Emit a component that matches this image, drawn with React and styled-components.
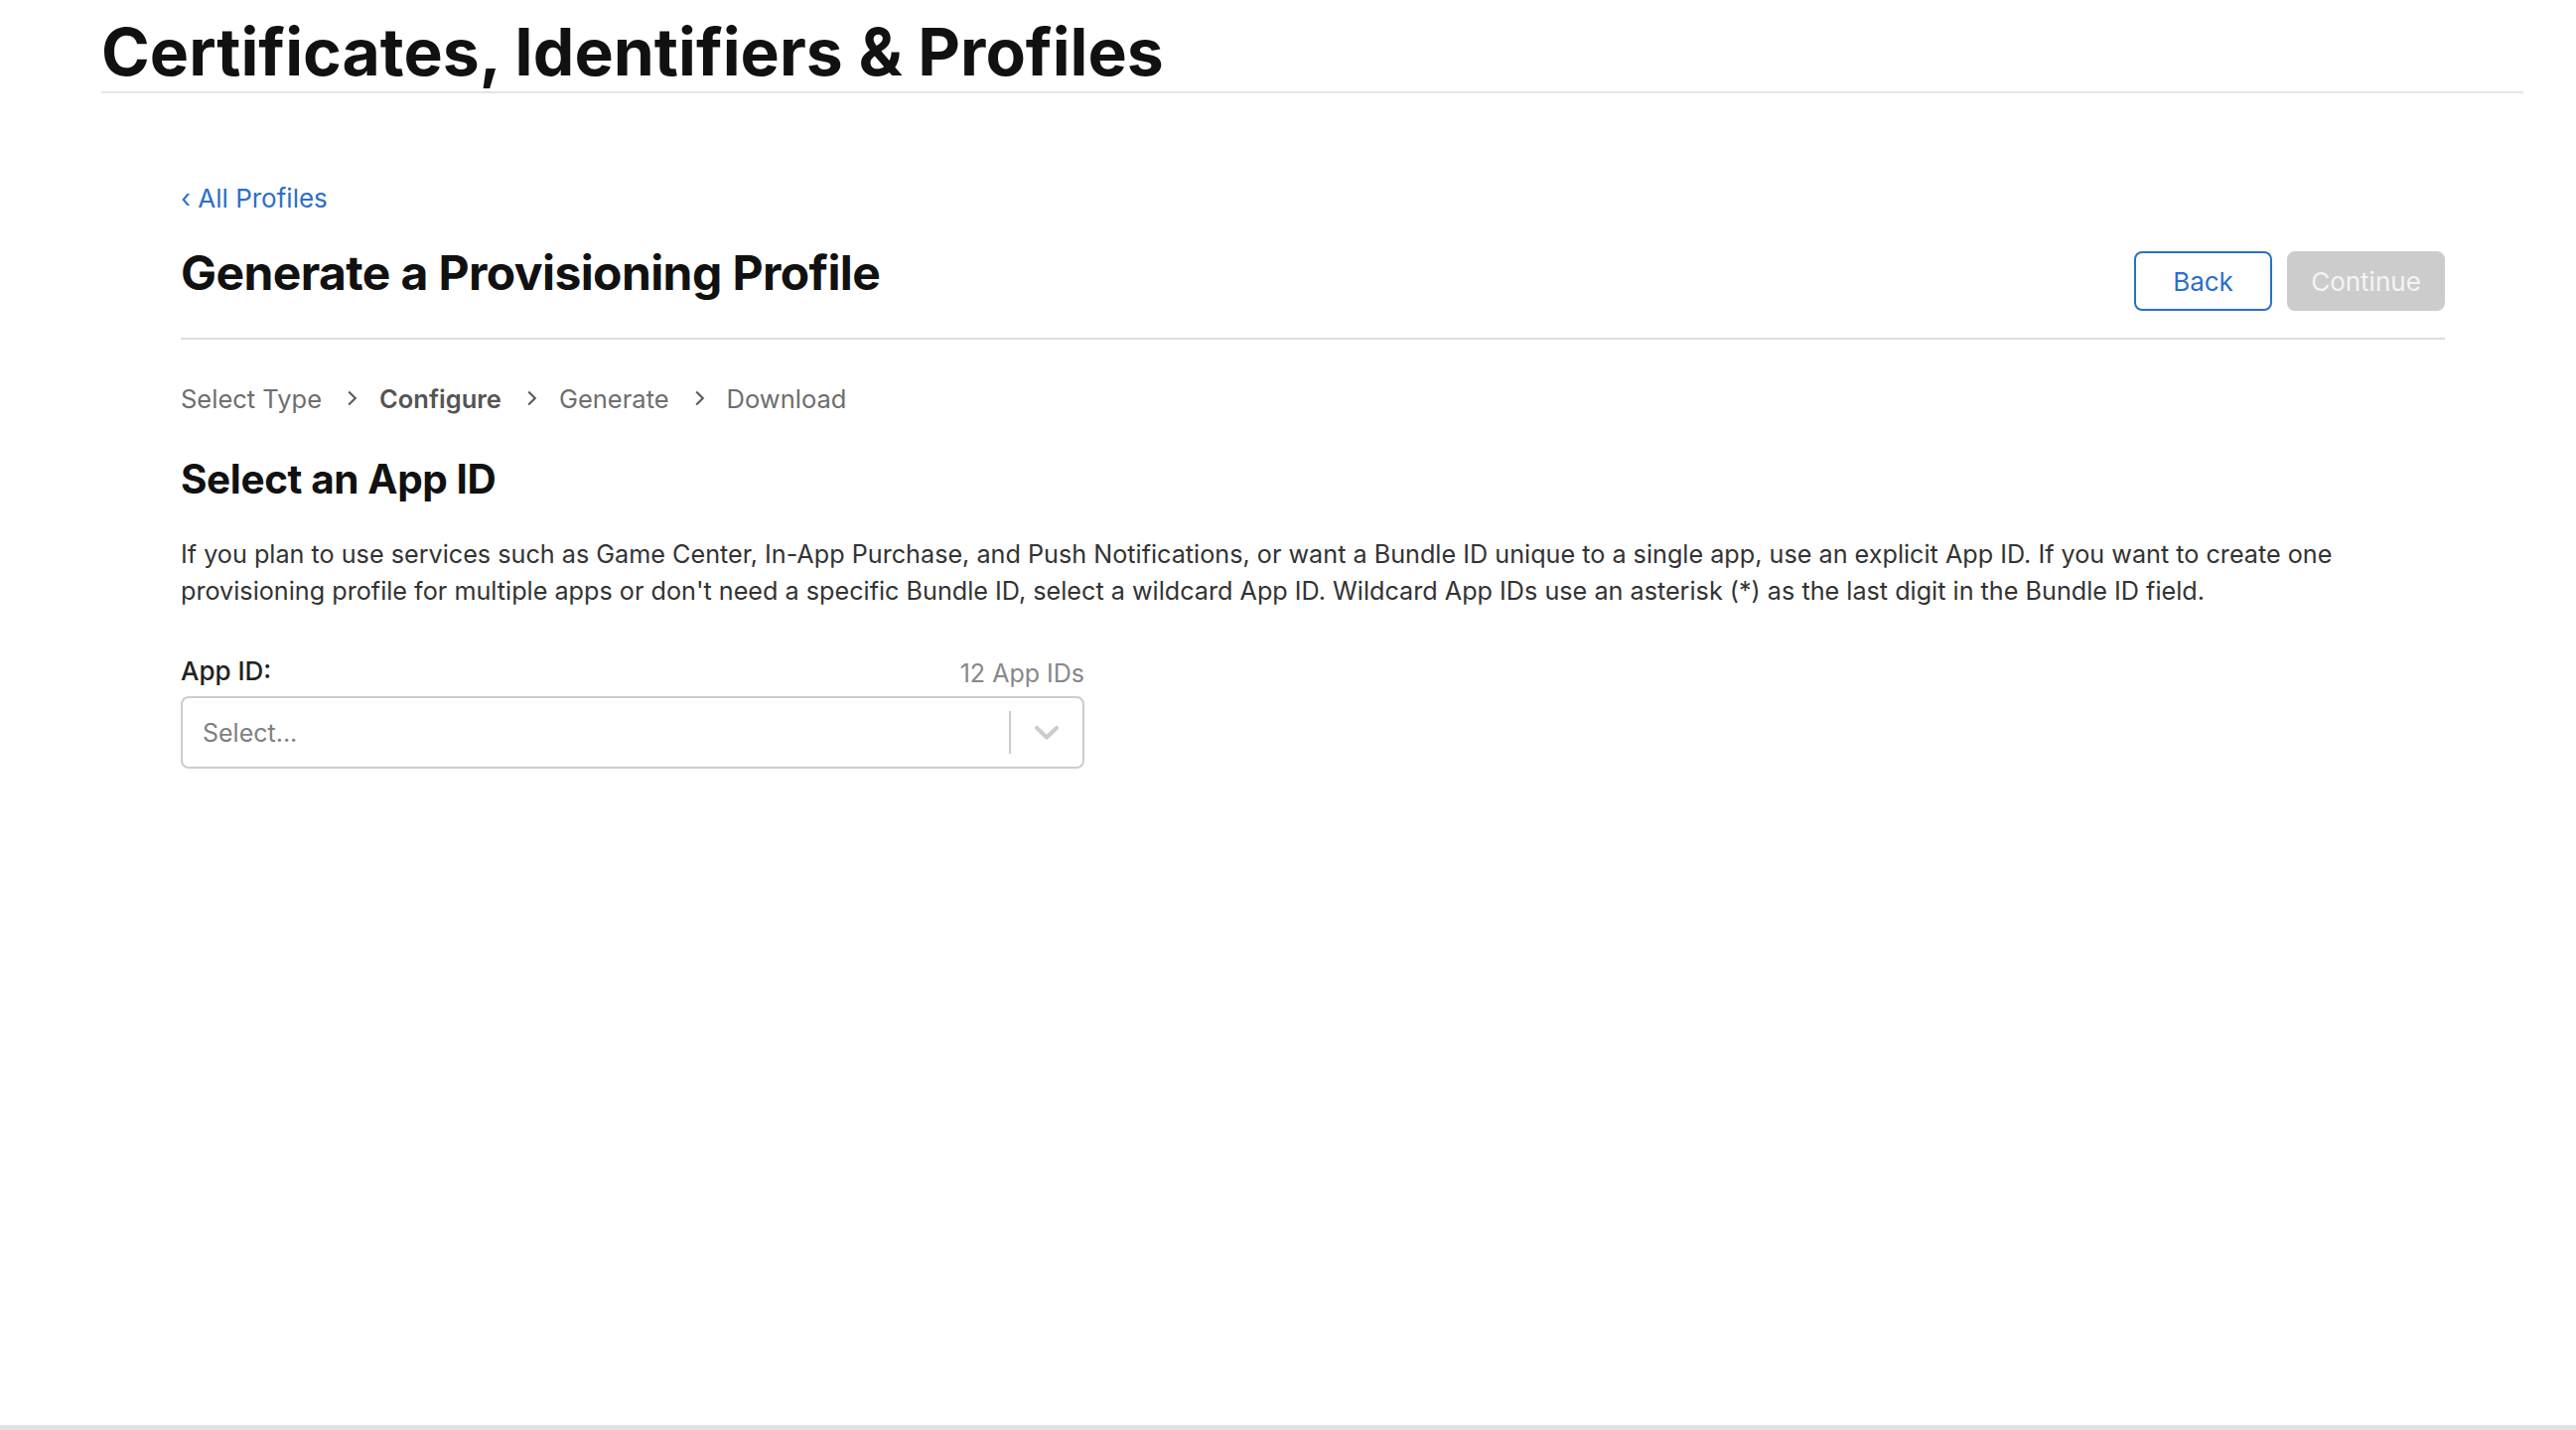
import React from 'react'
import styled, { createGlobalStyle } from 'styled-components'

const GlobalStyle = createGlobalStyle`
  html, body {
    margin: 0;
    padding: 0;
    background: #fff;
  }
  body {
    font-family: Inter, "Noto Sans", "Liberation Sans", sans-serif;
    color: #111;
  }
  * {
    box-sizing: border-box;
  }
`

const steps = [
  { label: 'Select Type' },
  { label: 'Configure', active: true },
  { label: 'Generate' },
  { label: 'Download' },
]

const App = () => {
  return (
    <Page>
      <GlobalStyle />
      <TopBar>
        <PageTitle>Certificates, Identifiers &amp; Profiles</PageTitle>
      </TopBar>

      <Main>
        <BackLink href="#">
          <span className="chev">‹</span> All Profiles
        </BackLink>

        <SectionHeader>
          <Heading>Generate a Provisioning Profile</Heading>
          <Actions>
            <Button>Back</Button>
            <Button $disabled>Continue</Button>
          </Actions>
        </SectionHeader>

        <Steps>
          {steps.map((step, i) => (
            <React.Fragment key={step.label}>
              {i > 0 && (
                <StepChevron viewBox="0 0 10 16" aria-hidden="true">
                  <path d="M2 2l6 6-6 6" />
                </StepChevron>
              )}
              <Step $active={step.active}>{step.label}</Step>
            </React.Fragment>
          ))}
        </Steps>

        <SubHeading>Select an App ID</SubHeading>

        <Description>
          If you plan to use services such as Game Center, In-App Purchase, and Push Notifications, or want a Bundle ID unique to a single app, use an explicit App ID. If you want to create one
          <br />
          provisioning profile for multiple apps or don't need a specific Bundle ID, select a wildcard App ID. Wildcard App IDs use an asterisk (*) as the last digit in the Bundle ID field.
        </Description>

        <Field>
          <FieldTop>
            <Label>App ID:</Label>
            <Count>12 App IDs</Count>
          </FieldTop>
          <SelectBox>
            <Placeholder>Select...</Placeholder>
            <Indicator>
              <Separator />
              <svg viewBox="0 0 26 16" width="26" height="16" aria-hidden="true">
                <path d="M3 3l10 9.5 10-9.5" fill="none" stroke="#cccccc" strokeWidth="4.2" strokeLinecap="round" strokeLinejoin="round" />
              </svg>
            </Indicator>
          </SelectBox>
        </Field>
      </Main>

      <Footer />
    </Page>
  )
}

const Page = styled.div`
  min-height: 100vh;
  display: flex;
  flex-direction: column;
`

const TopBar = styled.header`
  margin: 0 53px 0 102px;
  border-bottom: 2px solid #e4e4e4;
  height: 94px;
  display: flex;
  align-items: flex-end;
`

const PageTitle = styled.h1`
  margin: 0 0 7px;
  font-size: 66px;
  line-height: 1;
  font-weight: 700;
  color: #111;
`

const Main = styled.main`
  margin: 0 132px 0 182px;
  padding-top: 90px;
  display: flex;
  flex-direction: column;
`

const BackLink = styled.a`
  align-self: flex-start;
  color: #2b6fc8;
  text-decoration: none;
  font-size: 26px;
  line-height: 32px;

  .chev {
    font-size: 26px;
  }
`

const SectionHeader = styled.div`
  display: flex;
  justify-content: space-between;
  align-items: flex-start;
  border-bottom: 2px solid #dddddd;
  padding: 30px 0 27px;
`

const Heading = styled.h2`
  margin: 0;
  font-size: 48px;
  line-height: 58px;
  font-weight: 700;
  letter-spacing: -0.6px;
  color: #111;
`

const Actions = styled.div`
  display: flex;
  gap: 15px;
  padding-top: 7px;
`

const Button = styled.button`
  height: 60px;
  width: ${(p) => (p.$disabled ? '159px' : '139px')};
  padding: 0;
  border-radius: 8px;
  font-family: inherit;
  font-size: 26px;
  border: 2px solid ${(p) => (p.$disabled ? '#cccccc' : '#2b6fc8')};
  background: ${(p) => (p.$disabled ? '#cccccc' : '#fff')};
  color: ${(p) => (p.$disabled ? '#f4f4f4' : '#2b6fc8')};
  cursor: ${(p) => (p.$disabled ? 'default' : 'pointer')};
`

const Steps = styled.nav`
  display: flex;
  align-items: center;
  margin-top: 42px;
  height: 34px;
`

const Step = styled.span`
  font-size: 25.5px;
  color: ${(p) => (p.$active ? '#555' : '#6e6e6e')};
  font-weight: ${(p) => (p.$active ? 600 : 400)};
`

const StepChevron = styled.svg`
  width: 11px;
  height: 18px;
  margin: 0 22px 0 25px;
  fill: none;
  stroke: #5a5a5a;
  stroke-width: 1.9;
`

const SubHeading = styled.h3`
  margin: 40px 0 0;
  font-size: 40.5px;
  line-height: 50px;
  font-weight: 700;
  letter-spacing: -0.4px;
  color: #111;
`

const Description = styled.p`
  margin: 32px 0 0;
  font-size: 25.2px;
  line-height: 36.5px;
  color: #333;
`

const Field = styled.div`
  width: 910px;
  margin-top: 47px;
`

const FieldTop = styled.div`
  display: flex;
  justify-content: space-between;
  align-items: flex-end;
  margin-bottom: 10px;
`

const Label = styled.label`
  font-size: 26px;
  color: #222;
  font-weight: 500;
`

const Count = styled.span`
  font-size: 25px;
  color: #888;
  position: relative;
  top: 2px;
`

const SelectBox = styled.div`
  height: 73px;
  border: 2px solid #cccccc;
  border-radius: 8px;
  display: flex;
  align-items: center;
  justify-content: space-between;
  padding-left: 20px;
`

const Placeholder = styled.span`
  font-size: 25px;
  color: #808080;
`

const Indicator = styled.div`
  display: flex;
  align-items: center;
  height: 100%;

  svg {
    margin: 0 23px 0 23px;
  }
`

const Separator = styled.span`
  width: 2px;
  height: 43px;
  background: #cccccc;
`

const Footer = styled.footer`
  margin-top: auto;
  height: 5px;
  background: #e2e2e2;
`

export default App
